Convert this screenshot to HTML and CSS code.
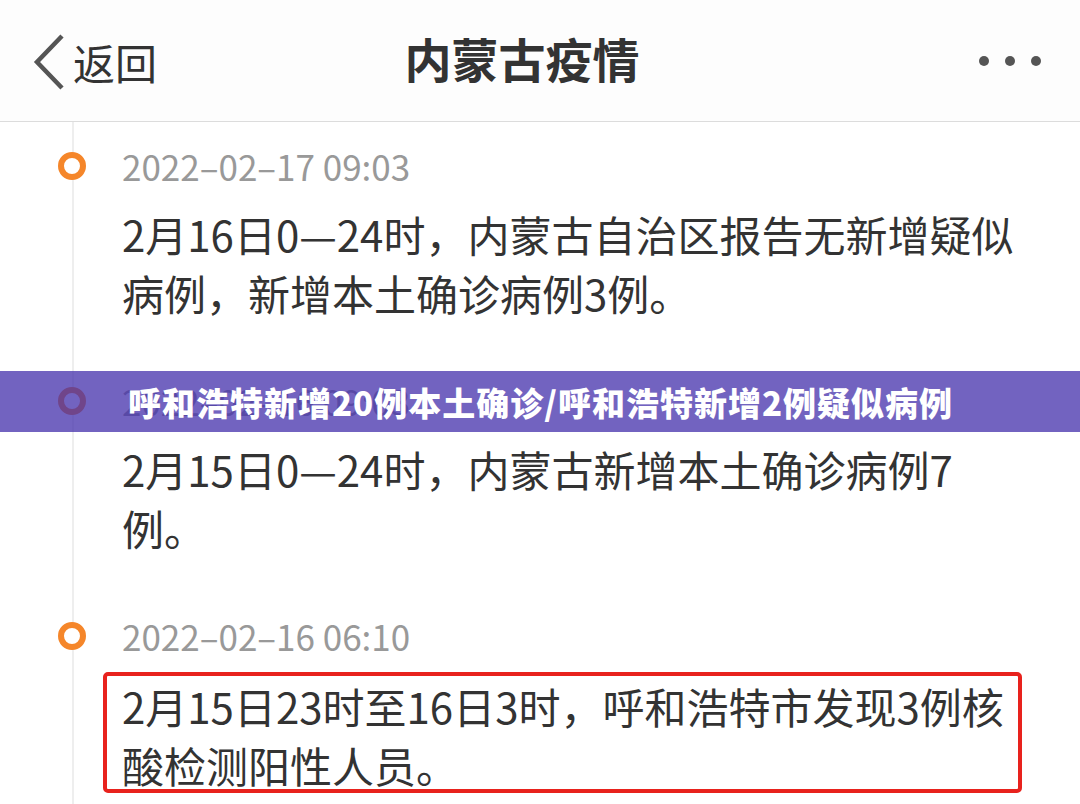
FILE: index.html
```html
<!DOCTYPE html>
<html>
<head>
    <meta charset="utf-8">
    <meta name="viewport" content="width=device-width, user-scalable=no">
    <link rel="stylesheet" href="styles.css">
</head>
<body>
<div class="nav-bar">
    <a class="back" href="#">
        <svg class="back-arrow" width="34" height="58" viewBox="0 0 34 58">
            <polyline points="30,3 5,29 30,55" fill="none" stroke="#555" stroke-width="4.5"/>
        </svg>
        <span>返回</span>
    </a>
    <div class="nav-title">内蒙古疫情</div>
    <div class="more">
        <i></i><i></i><i></i>
    </div>
</div>

<div class="timeline">
    <div class="entry">
        <div class="time">2022–02–17 09:03</div>
        <div class="text">2月16日0—24时，内蒙古自治区报告无新增疑似病例，新增本土确诊病例3例。</div>
    </div>
    <div class="entry">
        <div class="time">2022–02–16 09:03</div>
        <div class="text">2月15日0—24时，内蒙古新增本土确诊病例7例。</div>
    </div>
    <div class="entry">
        <div class="time">2022–02–16 06:10</div>
        <div class="text marked">2月15日23时至16日3时，呼和浩特市发现3例核酸检测阳性人员。</div>
    </div>
</div>

<div class="headline">呼和浩特新增20例本土确诊/呼和浩特新增2例疑似病例</div>
</body>
</html>
```

FILE: styles.css
```css
body {
    margin: 0;
    height: 804px;
    overflow: hidden;
    background: #fff;
    color: #333;
    font-family: "Noto Sans CJK SC", "Noto Sans", sans-serif;
}

/* top bar */
.nav-bar {
    height: 121px;
    border-bottom: 1px solid #dcdcdc;
    background: #fdfdfd;
    display: flex;
    align-items: center;
    position: relative;
}

.back {
    display: flex;
    align-items: center;
    gap: 7px;
    margin-left: 32px;
    margin-top: 2px;
    color: #333;
    text-decoration: none;
    font-size: 42px;
}

.nav-title {
    position: absolute;
    left: 0;
    right: 36px;
    top: 27px;
    text-align: center;
    font-size: 47px;
    font-weight: 700;
    line-height: 62px;
    color: #333;
    pointer-events: none;
}

.more {
    margin-left: auto;
    margin-right: 39px;
    display: flex;
    gap: 16px;
}

.more i {
    width: 10px;
    height: 10px;
    border-radius: 50%;
    background: #555;
}

/* timeline */
.timeline {
    padding: 21px 0 0 122px;
    background: linear-gradient(#eee, #eee) 72px 0 / 2px 100% no-repeat;
    height: 661px;
}

.entry {
    position: relative;
    width: 903px;
    margin-bottom: 56px;
}

.entry::before {
    content: "";
    position: absolute;
    left: -64px;
    top: 9px;
    width: 16px;
    height: 16px;
    border: 6px solid #f5862a;
    border-radius: 50%;
    background: #fff;
}

.time {
    font-size: 35px;
    line-height: 46px;
    color: #999;
}

.text {
    margin-top: 15px;
    font-size: 42px;
    line-height: 59px;
    color: #333;
}

.marked {
    margin: 13px 0 0 -19px;
    padding-left: 15px;
    width: 896px;
    height: 113px;
    border: 4px solid #e8221d;
    border-radius: 5px;
}

/* purple headline strip */
.headline {
    position: absolute;
    left: 0;
    right: 0;
    top: 371px;
    height: 61px;
    padding-left: 128px;
    background: rgba(67, 47, 171, 0.75);
    color: #fff;
    font-size: 33px;
    font-weight: 900;
    letter-spacing: 1px;
    line-height: 63px;
}
```
